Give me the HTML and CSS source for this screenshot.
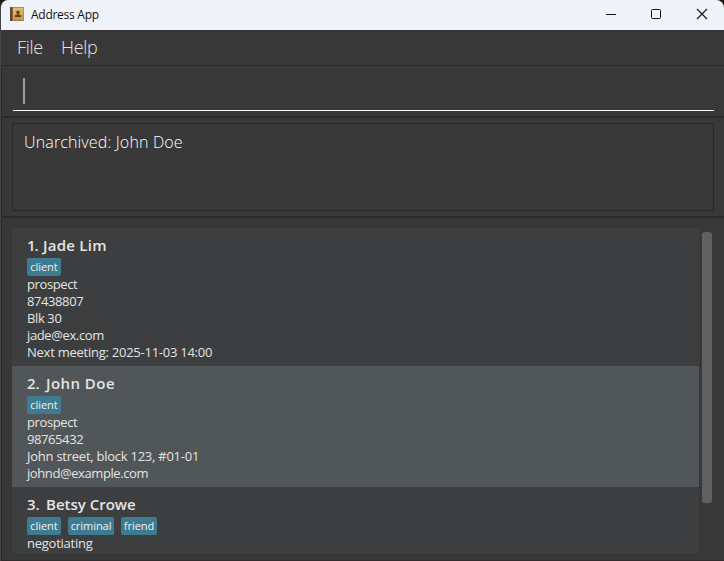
FILE: index.html
```html
<!DOCTYPE html>
<html lang="en">
<head>
<meta charset="utf-8">
<title>Address App</title>
<link rel="stylesheet" href="styles.css">
</head>
<body>
<div class="window">
  <header class="titlebar">
    <svg class="app-icon" width="14" height="14" viewBox="0 0 14 14">
      <defs><linearGradient id="cover" x1="0" y1="0" x2="0" y2="1"><stop offset="0" stop-color="#e6bd76"/><stop offset="1" stop-color="#c9963f"/></linearGradient></defs>
      <rect width="14" height="14" rx="1" fill="#9b7a49"/>
      <rect x="3" y="0.7" width="10.4" height="12.3" fill="url(#cover)"/>
      <rect width="2.4" height="14" rx=".6" fill="#61483e"/>
      <circle cx="8" cy="5.3" r="1.7" fill="#59431f"/>
      <path d="M7.3 6h1.4v1.6l2.5.7v1.7H4.8V8.300l2.500-.7z" fill="#59431f"/>
    </svg>
    <span class="title">Address App</span>
    <svg class="controls" width="104" height="12" viewBox="0 0 104 12" fill="none" stroke="#111">
      <path d="M0 6.500h10"/>
      <rect x="45.500" y="1.500" width="9" height="9" rx="1"/>
      <path d="M91 1l10 10M101 1L91 11" stroke-width="1.100"/>
    </svg>
  </header>
  <div class="client">
    <nav class="menubar"><span class="file">File</span><span class="help">Help</span></nav>
    <section class="command"><div class="field"><i class="caret"></i></div></section>
    <section class="result"><div class="message"><span>Unarchived: John Doe</span></div></section>
    <section class="people">
      <div class="list">
        <article class="card first">
          <h2><span>1.</span>Jade Lim</h2>
          <div class="tags"><b class="t-client">client</b></div>
          <p class="prospect">prospect</p>
          <p class="digits">87438807</p>
          <p class="blk">Blk 30</p>
          <p class="jade">jade@ex.com</p>
          <p class="meeting">Next meeting: 2025-11-03 14:00</p>
        </article>
        <article class="card selected">
          <h2><span>2.</span>John Doe</h2>
          <div class="tags"><b class="t-client">client</b></div>
          <p class="prospect">prospect</p>
          <p class="digits">98765432</p>
          <p class="street">John street, block 123, #01-01</p>
          <p class="johnd">johnd@example.com</p>
        </article>
        <article class="card last">
          <h2><span>3.</span>Betsy Crowe</h2>
          <div class="tags"><b class="t-client">client</b><b class="t-criminal">criminal</b><b class="t-friend">friend</b></div>
          <p class="negotiating">negotiating</p>
        </article>
      </div>
      <div class="scroll"></div>
    </section>
  </div>
</div>
</body>
</html>
```
FILE: styles.css
```css
* { box-sizing: border-box; }
body { margin: 0; background: #1c191b; font-family: "Open Sans", "Noto Sans", sans-serif; }
.window { width: 724px; height: 561px; overflow: hidden; border-left: 1px solid #444; border-radius: 8px 8px 0 0; background: #383838; }
.titlebar { height: 30px; display: flex; align-items: center; padding: 0 14px 2px 9px; background: #f0f3fa; color: #111; }
.title { font-size: 12px; margin-left: 7px; letter-spacing: -.27px; white-space: nowrap; }
.controls { margin-left: auto; }
.client { height: 531px; border-bottom: 1px solid #302c2d; }
.menubar { height: 35px; padding: 0 16px; display: flex; gap: 18px; font-size: 18px; font-weight: 300; letter-spacing: -.3px; line-height: 35px; color: #e4e4e4; }
.file { width: 26px; }
.command { height: 52px; border: 1px solid #2a2a2a; border-width: 1px 0 1px 1px; padding: 9px 10px 0 11px; }
.field { height: 36px; border-bottom: 1px solid #fff; padding: 3px 0 0 10px; }
.caret { display: block; width: 2px; height: 26px; background: #9c9c9c; }
.result { height: 100px; border: 1px solid #2a2a2a; border-width: 1px 0 1px 1px; padding: 5px 10px 0; }
.message { height: 88px; border: 1px solid #292929; padding: 5px 11px; color: #fff; font-size: 16px; font-weight: 300; letter-spacing: .15px; line-height: 26px; }
.people { height: 343px; border: 1px solid #2a2a2a; border-width: 1px 0 0 1px; padding: 10px 11px 0 10px; display: flex; gap: 3px; }
.list { width: 687px; height: 325px; overflow: hidden; background: #3c3e3f; color: #e4e4e4; }
.scroll { width: 10px; height: 271px; margin-top: 4px; border-radius: 3px; background: #606060; }
.card { height: 121px; padding: 5px 15px 0; }
.first { height: 138px; }
.selected { background: #515658; }
h2 { margin: 0; height: 25px; font-size: 15px; font-weight: 600; letter-spacing: .25px; line-height: 25px; white-space: nowrap; }
h2 span { display: inline-block; width: 16px; letter-spacing: -1px; }
.selected h2 { letter-spacing: .45px; }
.last h2 { letter-spacing: 0; }
.card:not(.first) h2 span { width: 19px; letter-spacing: 0; }
.tags { display: flex; gap: 7px; height: 18px; }
.tags b { height: 18px; border-radius: 2px; background: #3e7b91; color: #f2f2f2; font-size: 11px; font-weight: 500; letter-spacing: -.05px; line-height: 17px; text-align: center; white-space: nowrap; }
.t-client { width: 34px; }
.t-criminal { width: 46px; }
.t-friend { width: 36px; }
p { margin: 0; height: 17px; font-size: 13px; letter-spacing: -.25px; line-height: 17px; white-space: nowrap; }
.prospect, .jade, .blk { letter-spacing: -.38px; }
.digits, .johnd { letter-spacing: -.41px; }
```
